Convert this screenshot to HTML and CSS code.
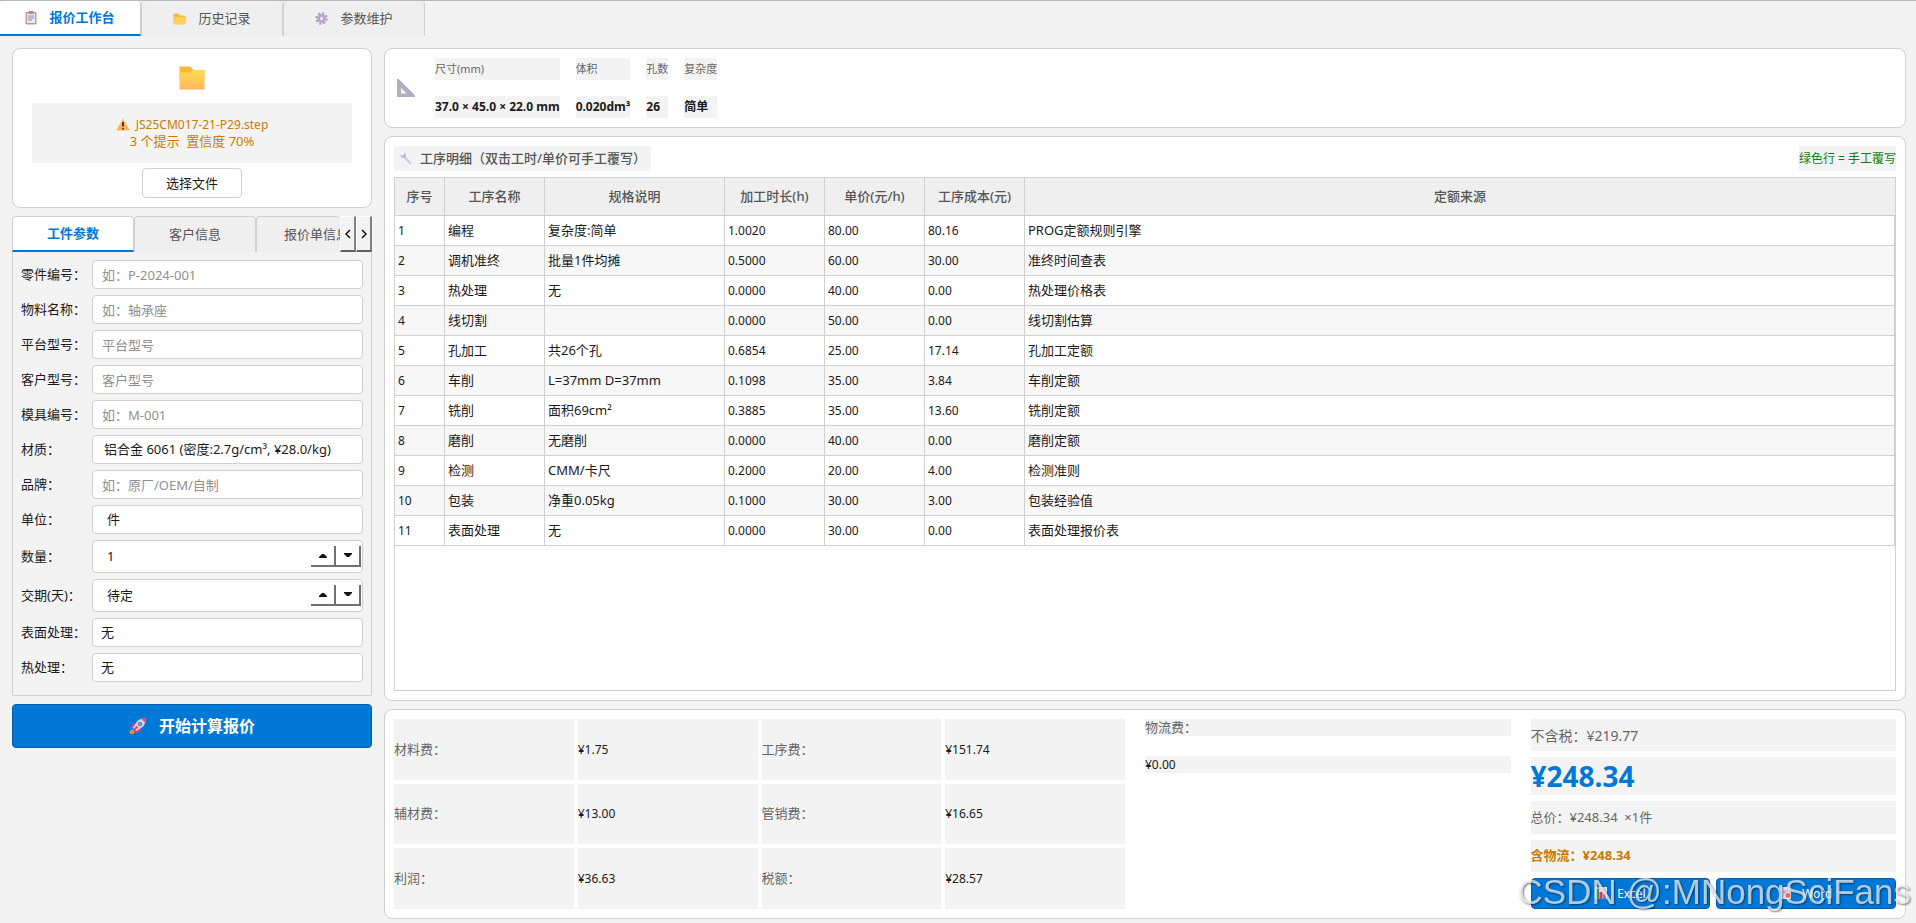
FILE: index.html
```html
<!DOCTYPE html>
<html lang="zh-CN">
  <head>
    <meta charset="utf-8">
    <meta name="viewport" content="width=device-width, initial-scale=1">
    <title>报价工作台</title>
    <link rel="stylesheet" href="styles.css">
  </head>

  <body>
    <nav class="tabs main-tabs">
      <button class="tab active">
        <svg width="12" height="14" viewBox="0 0 12 14"><rect x="0.5" y="1" width="11" height="12.5" rx="1" fill="#c79a83"/><rect x="2" y="2.5" width="8" height="9.5" fill="#eee9f4"/><rect x="3.5" y="0" width="5" height="3" rx="1" fill="#9a91a8"/><path d="M3 5h6M3 7h6M3 9h4" stroke="#8f88b4"/></svg>
        报价工作台
      </button>
      <button class="tab">
        <svg width="13" height="12" viewBox="0 0 26 24"><path d="M1 3q0-2 2-2h7l4 4h9q2 0 2 2v14H1z" fill="#f9b936"/><path d="M3 8h23l-2 15H1z" fill="#ffd05c"/></svg>
        历史记录
      </button>
      <button class="tab">
        <svg width="13" height="13" viewBox="0 0 24 24"><circle cx="12" cy="12" r="9" fill="none" stroke="#a99bc7" stroke-width="5" stroke-dasharray="3.5 3.57"/><circle cx="12" cy="12" r="6" fill="none" stroke="#b4a8cb" stroke-width="5"/><circle cx="12" cy="12" r="3.5" fill="#f2eef8" stroke="#8f86a5"/></svg>
        参数维护
      </button>
    </nav>

    <div class="workspace">
      <aside class="side">
        <section class="card upload">
          <svg width="26" height="24" viewBox="0 0 26 24"><defs><linearGradient id="fold" x1="0" y1="0" x2="0" y2="1"><stop offset="0" stop-color="#ffdc50"/><stop offset="1" stop-color="#ffb75d"/></linearGradient></defs><path d="M0.5 0.5h9.5q1.500 0 2.500 1.200L14.500 4H25.500V12H0.500z" fill="#fdb73b"/><path d="M0.500 6.500H11L14.500 4H25.500V23.500H0.500z" fill="url(#fold)"/></svg>
          <div class="file-status">
            <span class="file-name"><svg width="14" height="13" viewBox="0 0 14 13"><path d="M7 0.500L13.700 12.500H0.300z" fill="#ffb44f"/><path d="M7 4v4.500M7 10v1.500" stroke="#4b4048" stroke-width="2"/></svg>JS25CM017-21-P29.step</span>
            <span>3 个提示&nbsp; 置信度 70%</span>
          </div>
          <button class="btn-file">选择文件</button>
        </section>

        <section class="params">
          <div class="tabs sub-tabs">
            <button class="tab active">工件参数</button>
            <button class="tab">客户信息</button>
            <button class="tab clipped">报价单信息</button>
            <button class="scroll" aria-label="上一个"><svg width="6" height="10" viewBox="0 0 6 10"><path d="M5 1L1 5l4 4" fill="none" stroke="#111" stroke-width="1.500"/></svg></button>
            <button class="scroll" aria-label="下一个"><svg width="6" height="10" viewBox="0 0 6 10"><path d="M1 1l4 4-4 4" fill="none" stroke="#111" stroke-width="1.500"/></svg></button>
          </div>
          <form class="pane">
            <label for="part">零件编号：</label>
            <input type="text" id="part" placeholder="如：P-2024-001">
            <label for="mat-name">物料名称：</label>
            <input type="text" id="mat-name" placeholder="如：轴承座">
            <label for="platform">平台型号：</label>
            <input type="text" id="platform" placeholder="平台型号">
            <label for="cust-model">客户型号：</label>
            <input type="text" id="cust-model" placeholder="客户型号">
            <label for="mold">模具编号：</label>
            <input type="text" id="mold" placeholder="如：M-001">
            <label for="material">材质：</label>
            <select id="material" class="wide"><option>铝合金 6061 (密度:2.7g/cm³, ¥28.0/kg)</option></select>
            <label for="brand">品牌：</label>
            <input type="text" id="brand" placeholder="如：原厂/OEM/自制">
            <label for="unit">单位：</label>
            <select id="unit" class="indent"><option>件</option></select>
            <label for="qty">数量：</label>
            <div class="spin">
              <input type="text" id="qty" value="1">
              <button type="button" aria-label="增加"><svg width="8" height="5" viewBox="0 0 8 5"><path d="M0 5V4L3 1h2l3 3v1z" fill="#111"/></svg></button>
              <button type="button" aria-label="减少"><svg width="8" height="5" viewBox="0 0 8 5"><path d="M0 0v1l3 3h2l3-3V0z" fill="#111"/></svg></button>
            </div>
            <label for="days">交期(天)：</label>
            <div class="spin">
              <input type="text" id="days" value="待定">
              <button type="button" aria-label="增加"><svg width="8" height="5" viewBox="0 0 8 5"><path d="M0 5V4L3 1h2l3 3v1z" fill="#111"/></svg></button>
              <button type="button" aria-label="减少"><svg width="8" height="5" viewBox="0 0 8 5"><path d="M0 0v1l3 3h2l3-3V0z" fill="#111"/></svg></button>
            </div>
            <label for="surface">表面处理：</label>
            <select id="surface"><option>无</option></select>
            <label for="heat">热处理：</label>
            <select id="heat"><option>无</option></select>
          </form>
        </section>

        <button class="btn-calc">
          <svg width="18" height="18" viewBox="0 0 18 18"><path d="M1 17v-3l2-2 3 3-2 2z" fill="#f58a3c"/><path d="M7 6H5L1.500 10.500 5 11zM12 11v2l-4.500 3.500L7 13z" fill="#f0417b"/><path d="M16.500 1.500Q11 1 8 4.500L4 11l3 3 6.500-4Q17 7 16.500 1.500z" fill="#dcd8ec"/><path d="M17 1q-2.500-.5-5 .7L16.300 6Q17.500 3.500 17 1z" fill="#f04a6b"/><circle cx="11" cy="7" r="2" fill="#5ea4ec" stroke="#85799f"/><path d="M4.500 13.500L8.500 9.500" stroke="#e63973" stroke-width="2"/></svg>
          开始计算报价
        </button>
      </aside>

      <main class="content">
        <section class="card summary">
          <svg width="18" height="18" viewBox="0 0 18 18"><path d="M0 0h1.500L18 16.500V18H0z" fill="#b4aec2"/><path d="M4 9l5.500 5.500H4z" fill="#fff"/><path d="M2 1l15 15" stroke="#9a86cc" stroke-dasharray="1 1.500"/></svg>
          <dl>
            <div><dt>尺寸(mm)</dt><dd>37.0 × 45.0 × 22.0 mm</dd></div>
            <div><dt>体积</dt><dd>0.020dm³</dd></div>
            <div><dt>孔数</dt><dd>26</dd></div>
            <div><dt>复杂度</dt><dd>简单</dd></div>
          </dl>
        </section>

        <section class="card detail">
          <header>
            <h2><svg width="12" height="13" viewBox="0 0 12 13"><path d="M4 4.500l6 6.500" stroke="#d3c8e2" stroke-width="2.500" stroke-linecap="round"/><path d="M0.500 2.500Q0.500 6 4 6 6.500 5 6 2.500L4 0.500v2.500L2.800 4z" fill="#c3b5da"/></svg>工序明细（双击工时/单价可手工覆写）</h2>
            <span class="hint">绿色行 = 手工覆写</span>
          </header>
          <div class="table-box">
            <table>
              <colgroup><col class="c-no"><col class="c-name"><col class="c-spec"><col class="c-num"><col class="c-num"><col class="c-num"><col></colgroup>
              <thead>
                <tr><th>序号</th><th>工序名称</th><th>规格说明</th><th>加工时长(h)</th><th>单价(元/h)</th><th>工序成本(元)</th><th>定额来源</th></tr>
              </thead>
              <tbody>
                <tr><td>1</td><td>编程</td><td>复杂度:简单</td><td>1.0020</td><td>80.00</td><td>80.16</td><td>PROG定额规则引擎</td></tr>
                <tr><td>2</td><td>调机准终</td><td>批量1件均摊</td><td>0.5000</td><td>60.00</td><td>30.00</td><td>准终时间查表</td></tr>
                <tr><td>3</td><td>热处理</td><td>无</td><td>0.0000</td><td>40.00</td><td>0.00</td><td>热处理价格表</td></tr>
                <tr><td>4</td><td>线切割</td><td></td><td>0.0000</td><td>50.00</td><td>0.00</td><td>线切割估算</td></tr>
                <tr><td>5</td><td>孔加工</td><td>共26个孔</td><td>0.6854</td><td>25.00</td><td>17.14</td><td>孔加工定额</td></tr>
                <tr><td>6</td><td>车削</td><td>L=37mm D=37mm</td><td>0.1098</td><td>35.00</td><td>3.84</td><td>车削定额</td></tr>
                <tr><td>7</td><td>铣削</td><td>面积69cm²</td><td>0.3885</td><td>35.00</td><td>13.60</td><td>铣削定额</td></tr>
                <tr><td>8</td><td>磨削</td><td>无磨削</td><td>0.0000</td><td>40.00</td><td>0.00</td><td>磨削定额</td></tr>
                <tr><td>9</td><td>检测</td><td>CMM/卡尺</td><td>0.2000</td><td>20.00</td><td>4.00</td><td>检测准则</td></tr>
                <tr><td>10</td><td>包装</td><td>净重0.05kg</td><td>0.1000</td><td>30.00</td><td>3.00</td><td>包装经验值</td></tr>
                <tr><td>11</td><td>表面处理</td><td>无</td><td>0.0000</td><td>30.00</td><td>0.00</td><td>表面处理报价表</td></tr>
              </tbody>
            </table>
          </div>
        </section>

        <section class="card totals">
          <div class="fees">
            <span>材料费：</span><b>¥1.75</b><span>工序费：</span><b>¥151.74</b>
            <span>辅材费：</span><b>¥13.00</b><span>管销费：</span><b>¥16.65</b>
            <span>利润：</span><b>¥36.63</b><span>税额：</span><b>¥28.57</b>
          </div>
          <div class="logistics">
            <span>物流费：</span>
            <b>¥0.00</b>
          </div>
          <div class="final">
            <div class="net">不含税：¥219.77</div>
            <div class="price">¥248.34</div>
            <div>总价：¥248.34 &nbsp;×1件</div>
            <div class="with-ship">含物流：¥248.34</div>
            <div class="exports">
              <button><svg width="12" height="12" viewBox="0 0 12 12"><rect width="12" height="12" fill="#e9e6f4"/><path d="M2.500 12V2" stroke="#3fae5a" stroke-width="3"/><path d="M6 12V5" stroke="#e0356e" stroke-width="3"/><path d="M9.500 12V7" stroke="#4f8fd8" stroke-width="3"/></svg>Excel</button>
              <button><svg width="12" height="12" viewBox="0 0 12 12"><path d="M1 0h7l3 3v9H1z" fill="#e9e0f0"/><path d="M3 4h5M3 6h3" stroke="#a79bc0"/><circle cx="8" cy="8.500" r="2.500" fill="#ee6a4d"/></svg>Word</button>
            </div>
          </div>
        </section>
      </main>
    </div>

    <div class="watermark">CSDN @:MNongSciFans</div>
  </body>
</html>
```

FILE: styles.css
```css
* {
  box-sizing: border-box;
}
body {
  margin: 0;
  min-height: 100vh;
  display: flex;
  flex-direction: column;
  background: #f3f3f3;
  color: #1a1a1a;
  font-family: "Noto Sans", "Noto Sans CJK SC", sans-serif;
  font-size: 13px;
  line-height: 17px;
}
button, input, select {
  font: inherit;
  color: inherit;
  margin: 0;
}
svg {
  display: block;
  flex: none;
}
.card {
  background: #fff;
  border: 1px solid #d0d0d0;
  border-radius: 8px;
}

/* tabs */
.tabs {
  display: flex;
}
.tab {
  display: flex;
  align-items: center;
  justify-content: center;
  gap: 12px;
  height: 36px;
  padding: 0;
  background: #efefef;
  border: 1px solid #d0d0d0;
  border-bottom: 0;
  border-radius: 4px 4px 0 0;
  color: #555;
  white-space: nowrap;
}
.tab.active {
  background: #fff;
  border-bottom: 2px solid #0078d7;
  color: #0078d7;
  font-weight: bold;
}
.main-tabs {
  border-top: 1px solid #b8b8b8;
  height: 36px;
}
.main-tabs .tab {
  width: 142px;
  height: 35px;
  border-top: 0;
}
.main-tabs .active {
  width: 141px;
  border-left: 0;
}

.workspace {
  flex: 1;
  display: flex;
  gap: 12px;
  padding: 12px 10px 4px 12px;
}

/* left column */
.side {
  flex: none;
  width: 360px;
  display: flex;
  flex-direction: column;
  gap: 8px;
}
.upload {
  display: flex;
  flex-direction: column;
  align-items: center;
  height: 160px;
  padding: 17px 19px 9px;
}
.file-status {
  align-self: stretch;
  display: flex;
  flex-direction: column;
  align-items: center;
  justify-content: center;
  height: 60px;
  margin: 13px 0 5px;
  background: #f3f3f3;
  color: #ca7a00;
}
.file-name {
  display: flex;
  align-items: center;
  gap: 6px;
  font-size: 12px;
}
.btn-file {
  width: 100px;
  height: 30px;
  padding: 0;
  background: #fff;
  border: 1px solid #d0d0d0;
  border-radius: 4px;
}
.sub-tabs .tab {
  width: 122px;
}
.sub-tabs .clipped {
  flex: 1;
  width: 0;
  padding-left: 27px;
  justify-content: flex-start;
  overflow: hidden;
  border-right: 0;
}
.scroll {
  display: flex;
  align-items: center;
  justify-content: center;
  width: 16px;
  padding: 0;
  background: #f3f3f3;
  border: 1px solid #fff;
  border-right: 2px solid #808080;
  border-bottom: 2px solid #606060;
}
.pane {
  display: grid;
  grid-template-columns: 71px 1fr;
  align-items: center;
  row-gap: 6px;
  padding: 8px 8px 13px;
  border: 1px solid #d0d0d0;
  border-top: 0;
}
.pane label {
  white-space: nowrap;
}
.pane > input, .pane > select, .spin {
  width: 100%;
  height: 29px;
  padding: 0 9px;
  background: #fff;
  border: 1px solid #d0d0d0;
  border-radius: 4px;
}
.pane > select {
  appearance: none;
  padding: 0 8px;
}
.pane > .wide {
  padding: 0 11px;
}
.pane > .indent {
  padding: 0 14px;
}
.pane ::placeholder {
  color: #909090;
}
.pane .spin {
  display: flex;
  align-items: center;
  height: 33px;
  padding: 0 1px 0 14px;
}
.spin input {
  flex: 1;
  width: 0;
  padding: 0;
  border: 0;
}
.spin button {
  display: flex;
  align-items: center;
  justify-content: center;
  width: 25px;
  height: 21px;
  padding: 0;
  background: #fff;
  border: 0;
  border-right: 2px solid #707070;
  border-bottom: 2px solid #707070;
}
.btn-calc {
  display: flex;
  align-items: center;
  justify-content: center;
  gap: 12px;
  height: 44px;
  background: #0078d7;
  border: 1px solid #005fa8;
  border-radius: 4px;
  color: #fff;
  font-size: 16px;
  font-weight: bold;
}

/* right column */
.content {
  flex: 1;
  min-width: 0;
  display: flex;
  flex-direction: column;
  gap: 8px;
}
.summary {
  display: flex;
  align-items: center;
  gap: 20px;
  padding: 9px 12px;
}
dl {
  display: flex;
  gap: 16px;
  margin: 0;
}
dl div {
  display: flex;
  flex-direction: column;
  gap: 16px;
}
dt, dd {
  margin: 0;
  background: #f3f3f3;
  line-height: 22px;
}
dt {
  color: #666;
  font-size: 11px;
}
dd {
  font-size: 12px;
  font-weight: bold;
}
.detail {
  flex: 1;
  display: flex;
  flex-direction: column;
  padding: 9px;
}
.detail header {
  display: flex;
  justify-content: space-between;
  margin-bottom: 6px;
  line-height: 25px;
}
h2 {
  display: flex;
  align-items: center;
  gap: 8px;
  margin: 0;
  padding: 0 5px 0 6px;
  background: #f3f3f3;
  color: #555;
  font-size: 13px;
  font-weight: 500;
}
.hint {
  background: #f3f3f3;
  color: #107c10;
  font-size: 12px;
}
.table-box {
  flex: 1;
  border: 1px solid #d0d0d0;
}
table {
  width: 100%;
  table-layout: fixed;
  border-collapse: separate;
  border-spacing: 0;
}
.c-no {
  width: 50px;
}
.c-name, .c-num {
  width: 100px;
}
.c-spec {
  width: 180px;
}
th, td {
  height: 30px;
  padding: 0 3px;
  border-right: 1px solid #d0d0d0;
  border-bottom: 1px solid #d0d0d0;
  text-align: left;
  white-space: nowrap;
}
th {
  height: 38px;
  background: #efefef;
  color: #555;
  font-weight: 500;
  text-align: center;
}
th:last-child {
  border-right: 0;
}
td:first-child, td:nth-child(n+4):nth-child(-n+6) {
  font-size: 12px;
}
tbody tr:nth-child(even) {
  background: #f7f7f7;
}

/* bottom card */
.totals {
  display: grid;
  grid-template-columns: 2fr 1fr 1fr;
  gap: 20px;
  height: 210px;
  padding: 9px;
}
.totals b {
  font-size: 12px;
  font-weight: normal;
}
.totals span {
  color: #666;
}
.fees {
  display: grid;
  grid-template-columns: repeat(4, 1fr);
  grid-template-rows: repeat(3, 1fr);
  gap: 4px;
}
.fees > * {
  display: flex;
  align-items: center;
  background: #f3f3f3;
}
.logistics {
  display: flex;
  flex-direction: column;
  gap: 20px;
}
.logistics > * {
  background: #f3f3f3;
}
.final {
  display: flex;
  flex-direction: column;
  gap: 6px;
  color: #666;
}
.final > div {
  flex: 1;
  display: flex;
  align-items: center;
  background: #f3f3f3;
}
.final .net {
  font-size: 14px;
}
.final .price {
  flex: none;
  height: 38px;
  color: #0078d7;
  font-size: 28px;
  font-weight: bold;
}
.final .with-ship {
  color: #ca7a00;
  font-weight: bold;
}
.final .exports {
  flex: none;
  gap: 6px;
  background: none;
}
.exports button {
  flex: 1;
  display: flex;
  align-items: center;
  justify-content: center;
  gap: 10px;
  height: 31px;
  background: #0078d7;
  border: 1px solid #005fa8;
  border-radius: 4px;
  color: #fff;
  font-size: 12px;
}

.watermark {
  position: fixed;
  right: 5px;
  bottom: 11px;
  color: rgba(255, 255, 255, 0.7);
  font: 35px/40px "Liberation Sans", Arial, sans-serif;
  text-shadow: 1px 1px 2px rgba(0, 0, 0, 0.5);
  pointer-events: none;
}
```
